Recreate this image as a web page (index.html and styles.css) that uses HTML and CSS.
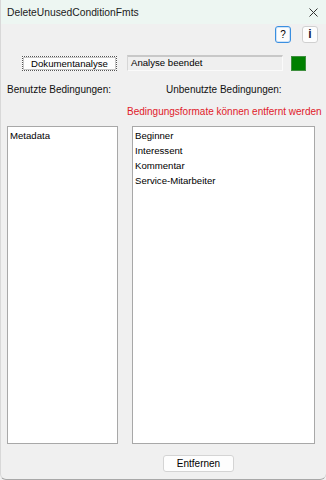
FILE: index.html
```html
<!DOCTYPE html>
<html lang="de">
<head>
<meta charset="utf-8">
<title>DeleteUnusedConditionFmts</title>
<link rel="stylesheet" href="styles.css">
</head>
<body>
<div class="window">
  <div class="titlebar">
    <span class="title">DeleteUnusedConditionFmts</span>
    <span class="close" aria-label="Schließen">
      <svg width="9" height="9" viewBox="0 0 9 9"><path d="M0.5 0.5 L8.5 8.5 M8.5 0.5 L0.5 8.5" stroke="#333" stroke-width="1" fill="none"/></svg>
    </span>
  </div>
  <div class="client">
    <div class="toolbar">
      <button class="tbtn focused">?</button>
      <button class="tbtn info">i</button>
    </div>
    <div class="analyse-row">
      <button class="btn analyse">Dokumentanalyse</button>
      <div class="status">Analyse beendet</div>
      <div class="led"></div>
    </div>
    <div class="label-row">
      <span class="label used">Benutzte Bedingungen:</span>
      <span class="label unused">Unbenutzte Bedingungen:</span>
    </div>
    <div class="warn">Bedingungsformate können entfernt werden</div>
    <div class="lists">
      <ul class="listbox left">
        <li>Metadata</li>
      </ul>
      <ul class="listbox right">
        <li>Beginner</li>
        <li>Interessent</li>
        <li>Kommentar</li>
        <li>Service-Mitarbeiter</li>
      </ul>
    </div>
    <div class="bottom-row">
      <button class="btn remove">Entfernen</button>
    </div>
  </div>
</div>
</body>
</html>
```
FILE: styles.css
```css
html, body {
  margin: 0;
  padding: 0;
  background: #f0f0f0;
}
.window {
  width: 326px;
  height: 480px;
  box-sizing: border-box;
  display: flex;
  flex-direction: column;
  background: #f0f0f0;
  border-bottom: 1px solid #a8a8a8;
  border-left: 1px solid #d8d8d8;
  border-radius: 0 0 6px 6px;
  overflow: hidden;
  font-family: "Liberation Sans", Arial, sans-serif;
  color: #000;
}
.titlebar {
  height: 24px;
  flex: none;
  display: flex;
  align-items: center;
  justify-content: space-between;
  background: #edf6f2;
  padding: 0 8px 0 6px;
}
.title {
  font-family: "Liberation Sans", Arial, sans-serif;
  font-size: 10.3px;
  color: #1b1b1b;
}
.close {
  display: flex;
  width: 9px;
  height: 9px;
}
.client {
  flex: 1;
  display: flex;
  flex-direction: column;
  padding: 2px 8px 8px 6px;
}
.toolbar {
  display: flex;
  justify-content: flex-end;
  gap: 11px;
}
.tbtn {
  width: 16px;
  height: 17px;
  padding: 0;
  margin: 0;
  border: 1px solid #d0d0d0;
  border-radius: 3px;
  background: #fdfdfd;
  font-family: "Liberation Sans", Arial, sans-serif;
  font-size: 10px;
  line-height: 15px;
  color: #000;
}
.tbtn.focused {
  border: 1px solid #3a8fe0;
  box-shadow: inset 0 0 0 1px #cfe3f7;
}
.tbtn.info {
  font-weight: bold;
  font-size: 12px;
  color: #1a1a3a;
}
.analyse-row {
  display: flex;
  align-items: flex-end;
  margin-top: 12px;
  height: 16px;
}
.btn {
  font-family: "Liberation Sans", Arial, sans-serif;
  font-size: 9.6px;
  padding: 0;
  margin: 0;
  background: #fdfdfd;
  color: #000;
}
.analyse {
  width: 95px;
  height: 15px;
  margin-left: 15px;
  border: 1px dotted #555;
  outline: 1px solid #c8c8c8;
  outline-offset: -2px;
  line-height: 12px;
}
.status {
  width: 156px;
  height: 16px;
  margin-left: 10px;
  box-sizing: border-box;
  border-top: 2px solid #c8c8c8;
  border-left: 1px solid #d6d6d6;
  border-right: 1px solid #fafafa;
  border-bottom: 1px solid #fafafa;
  background: #efefef;
  font-size: 9.6px;
  line-height: 12px;
  padding-left: 3px;
}
.led {
  width: 15px;
  height: 15px;
  margin-left: 8px;
  box-sizing: border-box;
  background: #008000;
  border: 1px solid #3f8f3f;
}
.label-row {
  display: grid;
  grid-template-columns: 159px 1fr;
  margin-top: 11px;
  font-size: 10px;
  line-height: 15px;
  height: 15px;
  color: #111;
}
.warn {
  margin-top: 7px;
  padding-left: 120px;
  font-size: 10px;
  line-height: 15px;
  color: #e0202a;
  white-space: nowrap;
}
.lists {
  display: grid;
  grid-template-columns: 111px 183px;
  column-gap: 14px;
  margin-top: 7px;
  height: 318px;
}
.listbox {
  list-style: none;
  margin: 0;
  padding: 1px 2px;
  background: #fff;
  border: 1px solid #a8a8a8;
  font-family: "Liberation Sans", Arial, sans-serif;
  font-size: 9.6px;
  line-height: 15px;
}
.bottom-row {
  display: flex;
  margin-top: 11px;
  padding-left: 156px;
}
.remove {
  width: 71px;
  height: 17px;
  border: 1px solid #d4d4d4;
  border-radius: 3px;
  line-height: 15px;
  font-size: 10px;
}
```
